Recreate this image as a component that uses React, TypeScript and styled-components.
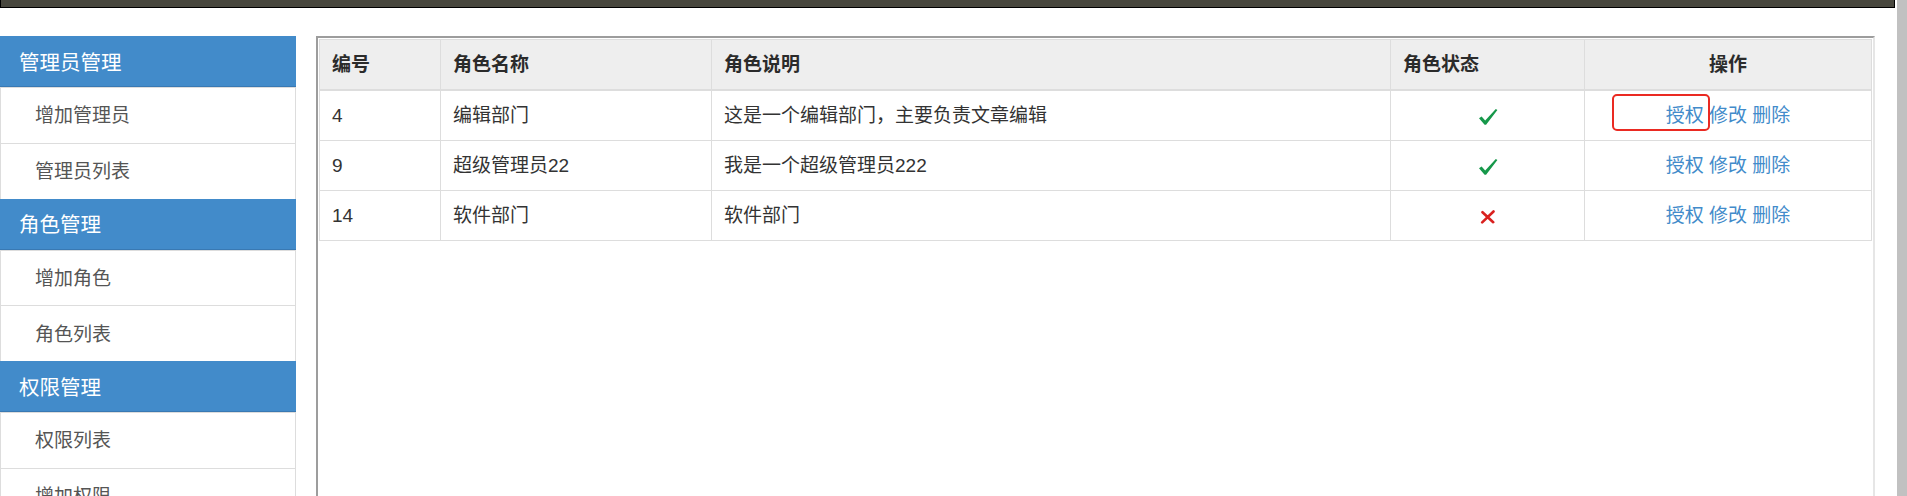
import styled, { createGlobalStyle } from "styled-components";

const GlobalStyle = createGlobalStyle`
  html, body {
    margin: 0;
    padding: 0;
    background: #ffffff;
    font-family: "Liberation Sans", "Noto Sans CJK SC", sans-serif;
  }
`;

const Page = styled.div`
  display: flex;
  height: 100vh;
  overflow: hidden;
`;

const Main = styled.div`
  flex: 1;
  display: flex;
  flex-direction: column;
  min-width: 0;
`;

const TopBar = styled.div`
  height: 7px;
  flex-shrink: 0;
  margin-right: 2px;
  background-color: #48473e;
  border-left: 1px solid #000;
  border-right: 1px solid #000;
  border-bottom: 1px solid #000;
`;

const Content = styled.div`
  display: flex;
  align-items: flex-start;
  gap: 20px;
  padding-top: 28px;
`;

const ScrollTrack = styled.div`
  width: 10px;
  flex-shrink: 0;
  background-color: #c1c1c1;
`;

const Sidebar = styled.div`
  width: 296px;
  flex-shrink: 0;
  display: flex;
  flex-direction: column;
`;

const MenuHeader = styled.div`
  height: 51px;
  box-sizing: border-box;
  display: flex;
  align-items: center;
  padding: 0 0 1px 19px;
  background-color: #428bca;
  border-bottom: 1px solid #3979b3;
  color: #ffffff;
  font-size: 20.5px;
`;

const MenuItem = styled.a`
  height: 54.75px;
  box-sizing: content-box;
  display: flex;
  align-items: center;
  padding: 0 0 0 34px;
  border: 1px solid #dddddd;
  border-bottom: none;
  color: #555555;
  font-size: 19px;
  text-decoration: none;
  background-color: #ffffff;

  span {
    margin-top: -3px;
  }
`;

const Frame = styled.div`
  width: 1559px;
  height: 600px;
  flex-shrink: 0;
  box-sizing: border-box;
  padding: 1px;
  border: 2px solid;
  border-color: #9d9d9d #e6e6e6 #e6e6e6 #9d9d9d;
  background: #ffffff;
`;

const Table = styled.table`
  width: 100%;
  table-layout: fixed;
  border-collapse: collapse;
  border: 1px solid #dddddd;
  font-size: 19px;
  color: #333333;
`;

const Col = styled.col<{ $width?: number }>`
  width: ${({ $width }) => ($width ? `${$width}px` : "auto")};
`;

const Th = styled.th<{ $center?: boolean }>`
  padding: 12px;
  line-height: 25px;
  background-color: #eeeeee;
  border: 1px solid #dddddd;
  border-bottom: 2px solid #dddddd;
  text-align: ${({ $center }) => ($center ? "center" : "left")};
  font-weight: bold;
  color: #2b2b2b;
`;

const Td = styled.td<{ $center?: boolean }>`
  padding: 12px;
  line-height: 25px;
  border: 1px solid #dddddd;
  text-align: ${({ $center }) => ($center ? "center" : "left")};
  vertical-align: middle;
`;

const OpsCell = styled.div`
  position: relative;
`;

const Link = styled.a`
  color: #428bca;
  text-decoration: none;
  cursor: pointer;
`;

const Highlight = styled.div`
  position: absolute;
  left: 15px;
  top: -9px;
  width: 98px;
  height: 37px;
  box-sizing: border-box;
  border: 2px solid #ea2a22;
  border-radius: 5px;
  pointer-events: none;
`;

const StatusIcon = styled.svg`
  display: inline-block;
  vertical-align: middle;
`;

const Check = () => (
  <StatusIcon width="20" height="18" viewBox="0 0 20 18">
    <path
      d="M1 10.2 L3.6 8.6 L7.2 12.6 L17.8 1 L19.4 2.1 L8.1 16.8 L6.6 16.8 Z"
      fill="#16984a"
    />
  </StatusIcon>
);

const Cross = () => (
  <StatusIcon width="16" height="14" viewBox="0 0 16 14">
    <path
      d="M2.5 2.2 L13.2 12.2 M13.5 1.5 L2.2 12.4"
      stroke="#d9211f"
      strokeWidth="2.6"
      strokeLinecap="round"
      fill="none"
    />
  </StatusIcon>
);

type Role = {
  id: number;
  name: string;
  desc: string;
  enabled: boolean;
};

const roles: Role[] = [
  { id: 4, name: "编辑部门", desc: "这是一个编辑部门，主要负责文章编辑", enabled: true },
  { id: 9, name: "超级管理员22", desc: "我是一个超级管理员222", enabled: true },
  { id: 14, name: "软件部门", desc: "软件部门", enabled: false },
];

const menu = [
  { title: "管理员管理", items: ["增加管理员", "管理员列表"] },
  { title: "角色管理", items: ["增加角色", "角色列表"] },
  { title: "权限管理", items: ["权限列表", "增加权限"] },
];

export default function App() {
  return (
    <>
      <GlobalStyle />
      <Page>
        <Main>
          <TopBar />
          <Content>
            <Sidebar>
              {menu.map((group) => (
                <div key={group.title}>
                  <MenuHeader>{group.title}</MenuHeader>
                  {group.items.map((item) => (
                    <MenuItem key={item}>
                      <span>{item}</span>
                    </MenuItem>
                  ))}
                </div>
              ))}
            </Sidebar>
            <Frame>
              <Table>
                <colgroup>
                  <Col $width={121} />
                  <Col $width={271} />
                  <Col $width={679} />
                  <Col $width={194} />
                  <Col />
                </colgroup>
                <thead>
                  <tr>
                    <Th>编号</Th>
                    <Th>角色名称</Th>
                    <Th>角色说明</Th>
                    <Th>角色状态</Th>
                    <Th $center>操作</Th>
                  </tr>
                </thead>
                <tbody>
                  {roles.map((role, idx) => (
                    <tr key={role.id}>
                      <Td>{role.id}</Td>
                      <Td>{role.name}</Td>
                      <Td>{role.desc}</Td>
                      <Td $center>{role.enabled ? <Check /> : <Cross />}</Td>
                      <Td $center>
                        <OpsCell>
                          {idx === 0 && <Highlight />}
                          <Link>授权</Link> <Link>修改</Link> <Link>删除</Link>
                        </OpsCell>
                      </Td>
                    </tr>
                  ))}
                </tbody>
              </Table>
            </Frame>
          </Content>
        </Main>
        <ScrollTrack />
      </Page>
    </>
  );
}
